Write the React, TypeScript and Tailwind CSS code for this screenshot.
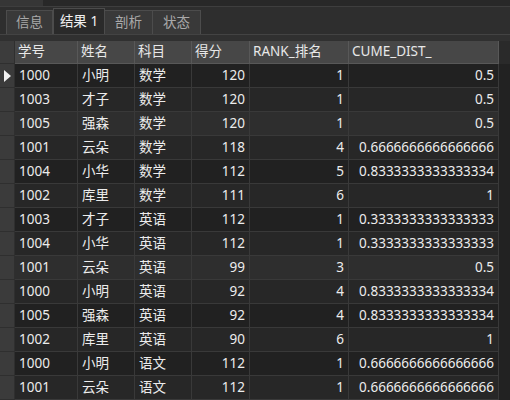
import React from "react";

const rows: [string, string, string, string, string, string][] = [
  ["1000", "小明", "数学", "120", "1", "0.5"],
  ["1003", "才子", "数学", "120", "1", "0.5"],
  ["1005", "强森", "数学", "120", "1", "0.5"],
  ["1001", "云朵", "数学", "118", "4", "0.6666666666666666"],
  ["1004", "小华", "数学", "112", "5", "0.8333333333333334"],
  ["1002", "库里", "数学", "111", "6", "1"],
  ["1003", "才子", "英语", "112", "1", "0.3333333333333333"],
  ["1004", "小华", "英语", "112", "1", "0.3333333333333333"],
  ["1001", "云朵", "英语", "99", "3", "0.5"],
  ["1000", "小明", "英语", "92", "4", "0.8333333333333334"],
  ["1005", "强森", "英语", "92", "4", "0.8333333333333334"],
  ["1002", "库里", "英语", "90", "6", "1"],
  ["1000", "小明", "语文", "112", "1", "0.6666666666666666"],
  ["1001", "云朵", "语文", "112", "1", "0.6666666666666666"],
];

const headers = ["学号", "姓名", "科目", "得分", "RANK_排名", "CUME_DIST_"];
const rightAligned = [false, false, false, true, true, true];

function rowBg(i: number) {
  if (i === 2 || i === 8) return "bg-[#2e2e2e]";
  return i % 2 === 0 ? "bg-[#212121]" : "bg-[#272727]";
}

export default function App() {
  return (
    <div
      className="w-[510px] h-[400px] overflow-hidden bg-[#2d2d2d] text-[13.5px] leading-none"
      style={{ fontFamily: '"Noto Sans", "Noto Sans CJK SC", sans-serif' }}
    >
      {/* top strip */}
      <div className="flex h-[6px] bg-[#282828]">
        <div className="w-[43px] bg-[#363636]" />
      </div>
      <div className="h-[1px] bg-[#3e3e3e]" />
      {/* tab bar */}
      <div className="flex items-end h-[28px] pl-[6px] bg-[#2e2e2e] border-b border-[#434343]">
        <div className="w-[47px] h-[24px] flex items-center justify-center bg-[#393939] border border-b-0 border-[#4c4c4c] text-[#a9a9a9]">
          信息
        </div>
        <div className="w-[52px] h-[26px] flex items-center justify-center bg-[#2a2a2a] border border-b-0 border-[#4c4c4c] text-[#f0f0f0]">
          结果 1
        </div>
        <div className="w-[48px] h-[24px] flex items-center justify-center bg-[#393939] border border-b-0 border-l-0 border-[#4c4c4c] text-[#a9a9a9]">
          剖析
        </div>
        <div className="w-[48px] h-[24px] flex items-center justify-center bg-[#393939] border border-b-0 border-l-0 border-[#4c4c4c] text-[#a9a9a9]">
          状态
        </div>
      </div>
      <div className="h-[6px] bg-[#303030]" />
      {/* table */}
      <div className="grid grid-cols-[15px_63px_57px_57px_58px_99px_150px_11px] bg-[#262626]">
        {/* header */}
        <div className="h-[23px] bg-[#3c3c3c] border-r border-b border-[#2f2f2f]" />
        {headers.map((h) => (
          <div
            key={h}
            className="h-[23px] flex items-center px-[3px] bg-[#474747] text-[#e8e8e8] border-r border-b border-[#585858] whitespace-nowrap overflow-hidden"
          >
            {h}
          </div>
        ))}
        <div className="h-[23px] bg-[#2a2a2a]" />
        {rows.map((r, ri) => (
          <React.Fragment key={ri}>
            <div className="h-[24px] bg-[#3b3b3b] border-r border-b border-[#2f2f2f] flex items-center justify-center">
              {ri === 0 && (
                <svg width="7" height="12" viewBox="0 0 7 12">
                  <path d="M0 0 L7 6 L0 12 Z" fill="#f2f2f2" />
                </svg>
              )}
            </div>
            {r.map((c, ci) => (
              <div
                key={ci}
                className={`h-[24px] flex items-center px-[4px] ${rowBg(ri)} text-[#ececec] border-r border-b border-[#393939] whitespace-nowrap overflow-hidden ${
                  rightAligned[ci] ? "justify-end" : "justify-start"
                }`}
              >
                {c}
              </div>
            ))}
            <div className="h-[24px] bg-[#222222]" />
          </React.Fragment>
        ))}
      </div>
    </div>
  );
}
